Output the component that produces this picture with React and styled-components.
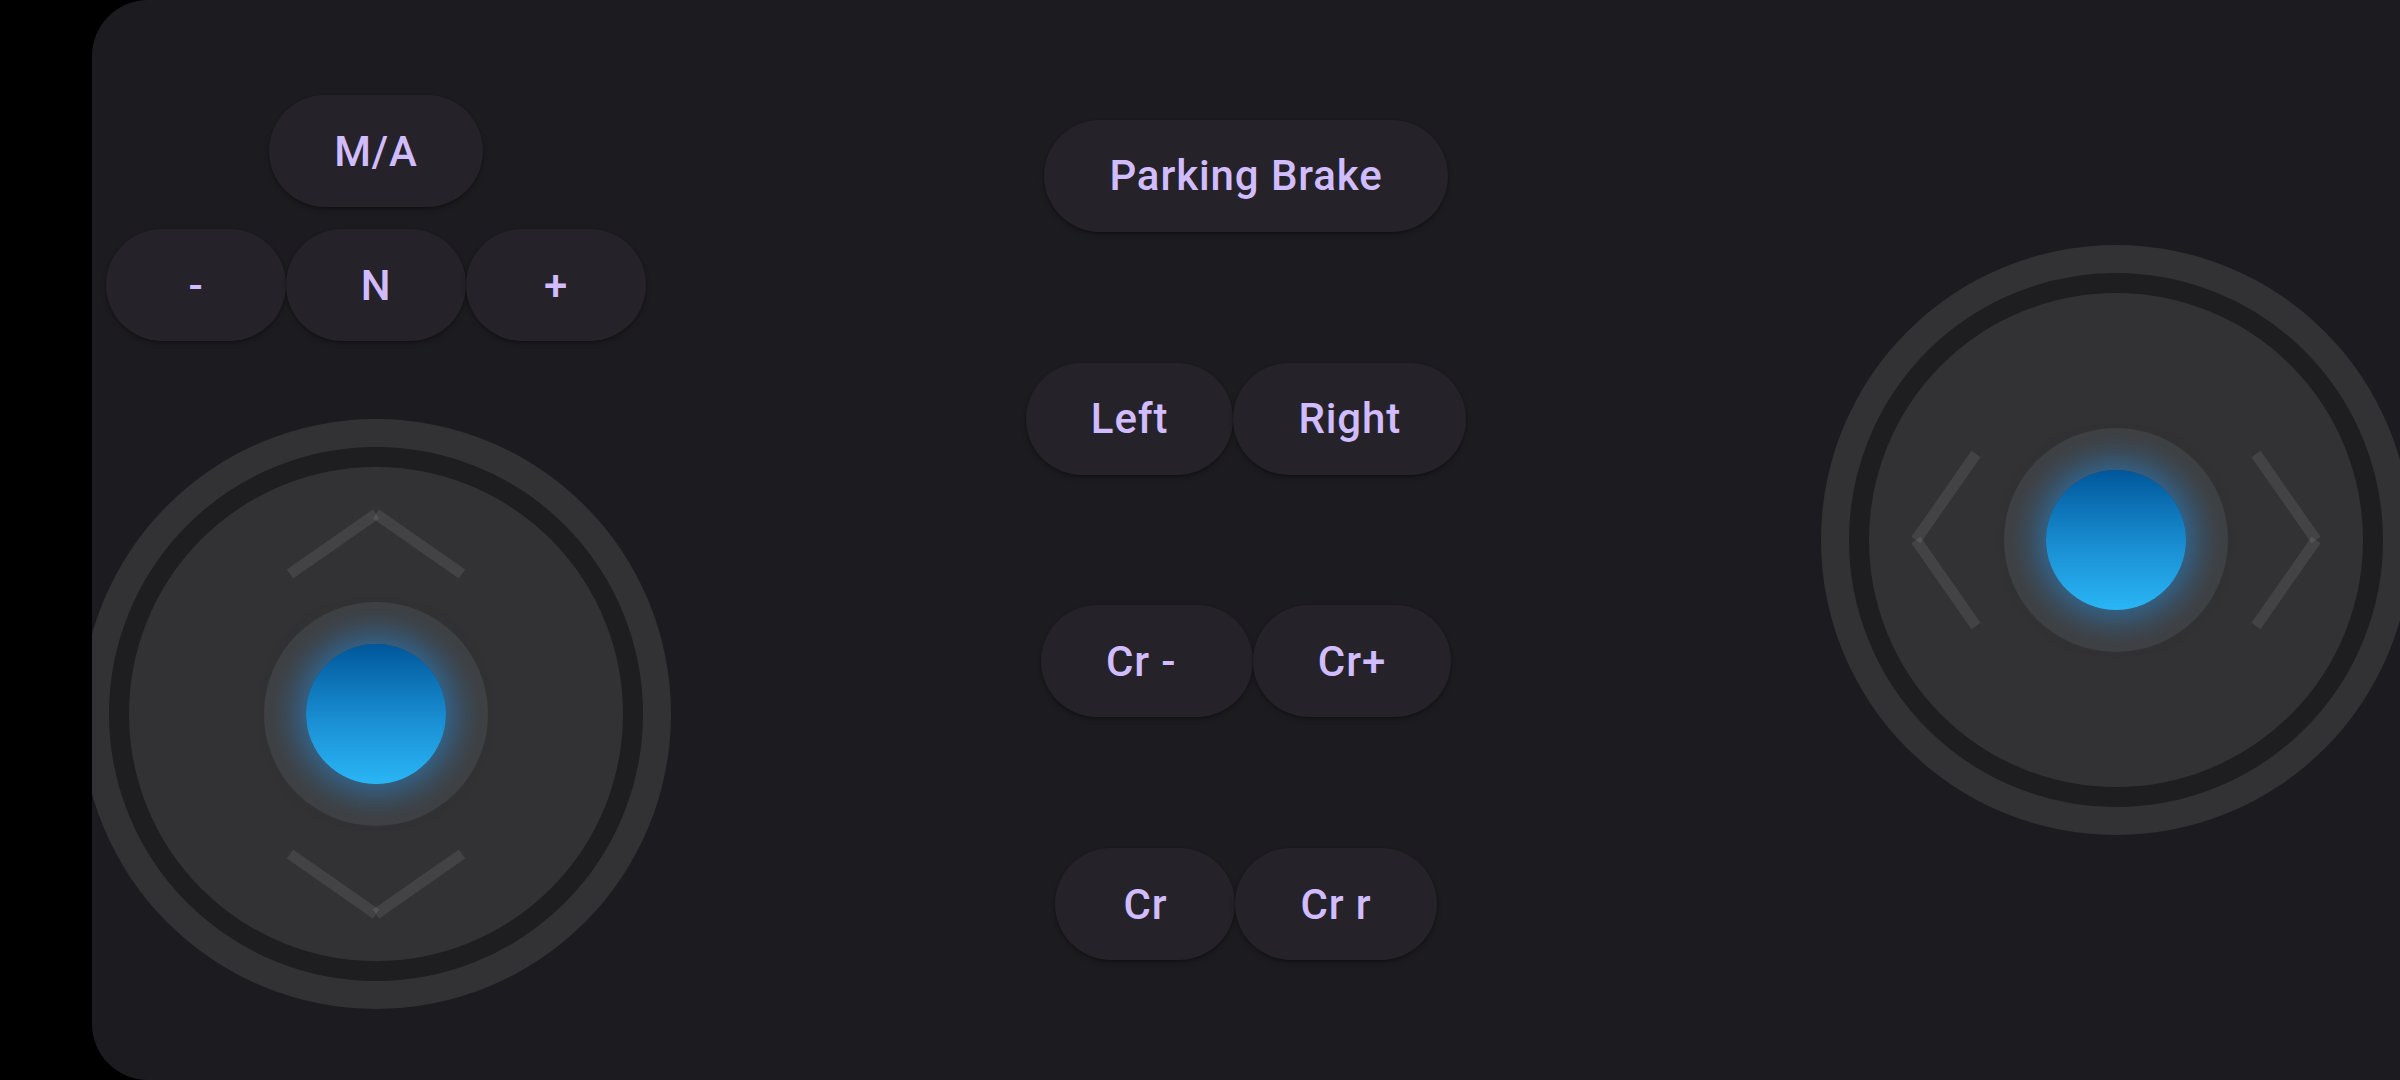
import React from "react";
import styled, { createGlobalStyle } from "styled-components";

const GlobalStyle = createGlobalStyle`
  html, body {
    margin: 0;
    padding: 0;
    background: #000;
  }
  body {
    font-family: Roboto, "Noto Sans", sans-serif;
  }
`;

const Screen = styled.div({
  width: "2400px",
  height: "1080px",
  background: "#000",
  paddingLeft: "92px",
  boxSizing: "border-box",
  overflow: "hidden",
});

const Panel = styled.main({
  height: "100%",
  background: "#1c1b1f",
  borderRadius: "56px 0 0 56px",
  overflow: "hidden",
  display: "grid",
  gridTemplateColumns: "568px 1fr 568px",
});

const LeftColumn = styled.section({
  display: "flex",
  flexDirection: "column",
  alignItems: "center",
  paddingTop: "84px",
});

const CenterColumn = styled.section({
  display: "flex",
  flexDirection: "column",
  alignItems: "center",
  justifyContent: "space-evenly",
});

const RightColumn = styled.section({
  display: "flex",
  alignItems: "center",
  justifyContent: "center",
});

const ButtonRow = styled.div({
  display: "flex",
  alignItems: "center",
});

const Pill = styled.button`
  height: 112px;
  min-width: 180px;
  margin: 11px 0;
  padding: 0 65px;
  border: none;
  border-radius: 56px;
  background: #252329;
  color: #d0bcff;
  font-family: Roboto, "Noto Sans", sans-serif;
  font-weight: 500;
  font-size: 42px;
  letter-spacing: 0.9px;
  white-space: pre;
  box-shadow: 0 3px 5px rgba(0, 0, 0, 0.22), 0 1px 2px rgba(0, 0, 0, 0.2);
  display: flex;
  align-items: center;
  justify-content: center;
  cursor: pointer;
`;

const Joystick = styled.div`
  width: 590px;
  height: 590px;
  flex-shrink: 0;
  margin-top: ${(p) => p.$offset || 0}px;
  border-radius: 50%;
  background: #323234;
  display: grid;
  place-items: center;
`;

const Track = styled.div`
  width: 534px;
  height: 534px;
  box-sizing: border-box;
  border-radius: 50%;
  border: 20px solid #1e1d20;
  background: #323234;
  display: grid;
  place-items: center;
  & > * {
    grid-area: 1 / 1;
  }
`;

const Halo = styled.div`
  width: 224px;
  height: 224px;
  border-radius: 50%;
  background: #3f4042;
  display: grid;
  place-items: center;
`;

const Knob = styled.div`
  width: 140px;
  height: 140px;
  border-radius: 50%;
  background: linear-gradient(180deg, #01579b 0%, #1a8fd3 55%, #29b6f6 100%);
  box-shadow: 0 0 32px 10px rgba(33, 150, 243, 0.5);
`;

function Chevrons({ horizontal }) {
  const arm = "rgba(255,255,255,0.085)";
  return (
    <svg width="494" height="494" viewBox="-247 -247 494 494">
      <g
        transform={horizontal ? "rotate(90)" : undefined}
        stroke={arm}
        strokeWidth="11"
        strokeLinecap="butt"
      >
        <line x1="-86" y1="-140" x2="0" y2="-200" />
        <line x1="86" y1="-140" x2="0" y2="-200" />
        <line x1="-86" y1="140" x2="0" y2="200" />
        <line x1="86" y1="140" x2="0" y2="200" />
      </g>
    </svg>
  );
}

function Stick({ horizontal, offset }) {
  return (
    <Joystick $offset={offset}>
      <Track>
        <Chevrons horizontal={horizontal} />
        <Halo>
          <Knob />
        </Halo>
      </Track>
    </Joystick>
  );
}

export default function App() {
  return (
    <>
      <GlobalStyle />
      <Screen>
        <Panel>
          <LeftColumn>
            <Pill>M/A</Pill>
            <ButtonRow>
              <Pill>-</Pill>
              <Pill>N</Pill>
              <Pill>+</Pill>
            </ButtonRow>
            <Stick offset={67} />
          </LeftColumn>

          <CenterColumn>
            <ButtonRow>
              <Pill>Parking Brake</Pill>
            </ButtonRow>
            <ButtonRow>
              <Pill>Left</Pill>
              <Pill>Right</Pill>
            </ButtonRow>
            <ButtonRow>
              <Pill>{"Cr - "}</Pill>
              <Pill>Cr+</Pill>
            </ButtonRow>
            <ButtonRow>
              <Pill>Cr</Pill>
              <Pill>Cr r</Pill>
            </ButtonRow>
          </CenterColumn>

          <RightColumn>
            <Stick horizontal />
          </RightColumn>
        </Panel>
      </Screen>
    </>
  );
}
